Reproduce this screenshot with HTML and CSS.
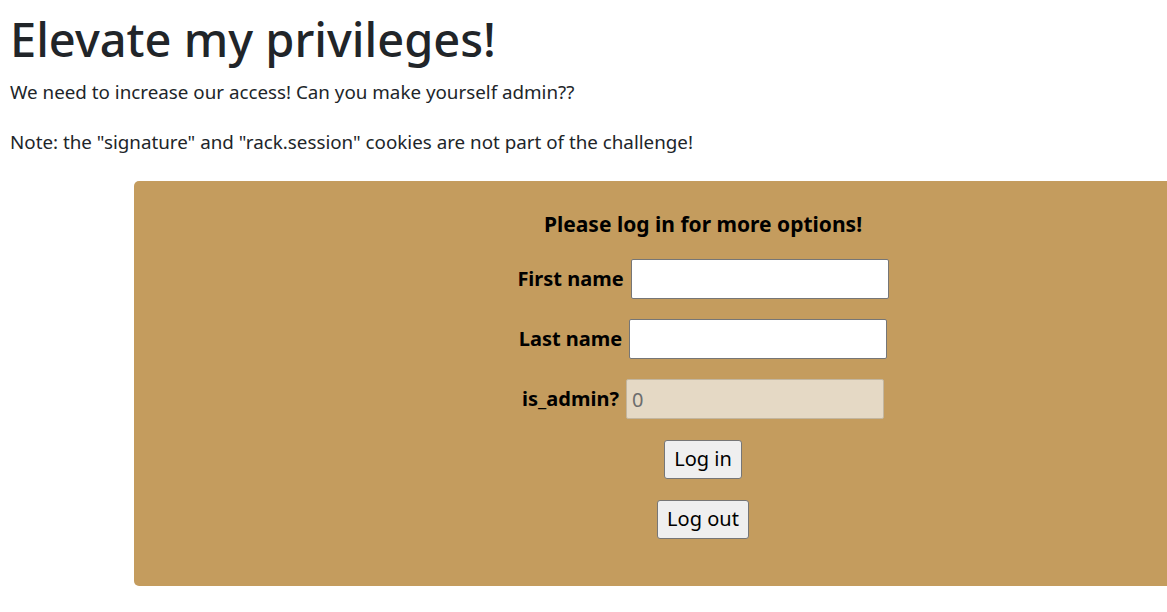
FILE: index.html
```html
<!DOCTYPE html>
<html lang="en">
<head>
<meta charset="utf-8">
<title>Elevate my privileges!</title>
<link rel="stylesheet" href="styles.css">
</head>
<body>
<div class="page">
  <h1 class="title">Elevate my privileges!</h1>
  <p class="lead-line">We need to increase our access! Can you make yourself admin??</p>
  <p class="note">Note: the "signature" and "rack.session" cookies are not part of the challenge!</p>
  <div class="panel">
    <form class="login">
      <p class="heading">Please log in for more options!</p>
      <div class="row">
        <label class="lbl" for="first">First name</label>
        <input class="field" id="first" type="text">
      </div>
      <div class="row">
        <label class="lbl" for="last">Last name</label>
        <input class="field" id="last" type="text">
      </div>
      <div class="row">
        <label class="lbl" for="admin">is_admin?</label>
        <input class="field field-disabled" id="admin" type="text" value="0" disabled>
      </div>
      <div class="row">
        <button class="btn" type="button">Log in</button>
      </div>
      <div class="row">
        <button class="btn" type="button">Log out</button>
      </div>
    </form>
  </div>
</div>
</body>
</html>
```
FILE: styles.css
```css
html, body {
  margin: 0;
  padding: 0;
  overflow-x: hidden;
  background: #fff;
}
body {
  font-family: "Noto Sans", "Open Sans", sans-serif;
  font-size: 18.8px;
  line-height: 30px;
  color: #212529;
}
.page {
  padding: 0 0 0 10px;
  overflow: hidden;
}
.title {
  font-size: 47px;
  font-weight: 500;
  line-height: 1.2;
  margin: 11px 0 10px;
}
.lead-line {
  margin: 0 0 20px;
}
.note {
  margin: 0 0 24px;
}
.panel {
  margin-left: 124px;
  width: 1138px;
  background: #c49c5e;
  border-radius: 5px;
  padding: 28px 0 47px;
  color: #000;
}
.login {
  display: flex;
  flex-direction: column;
  align-items: center;
  gap: 20px;
  font-size: 20px;
}
.heading {
  margin: 0;
  font-size: 21px;
  font-weight: 700;
  line-height: 30px;
}
.row {
  display: flex;
  align-items: center;
  gap: 7px;
  height: 40px;
}
.lbl {
  font-weight: 700;
}
.field {
  width: 258px;
  height: 40px;
  box-sizing: border-box;
  border: 1px solid #767676;
  border-radius: 2px;
  background: #fff;
  font: inherit;
  font-size: 20px;
  padding: 2px 5px;
}
.field-disabled {
  background: #e5d9c5;
  border-color: #c3b69f;
  color: #6d6d6d;
}
.btn {
  font: inherit;
  font-size: 20px;
  height: 39px;
  padding: 0 9px;
  background: #efefef;
  border: 1px solid #767676;
  border-radius: 3px;
  color: #000;
}
```
